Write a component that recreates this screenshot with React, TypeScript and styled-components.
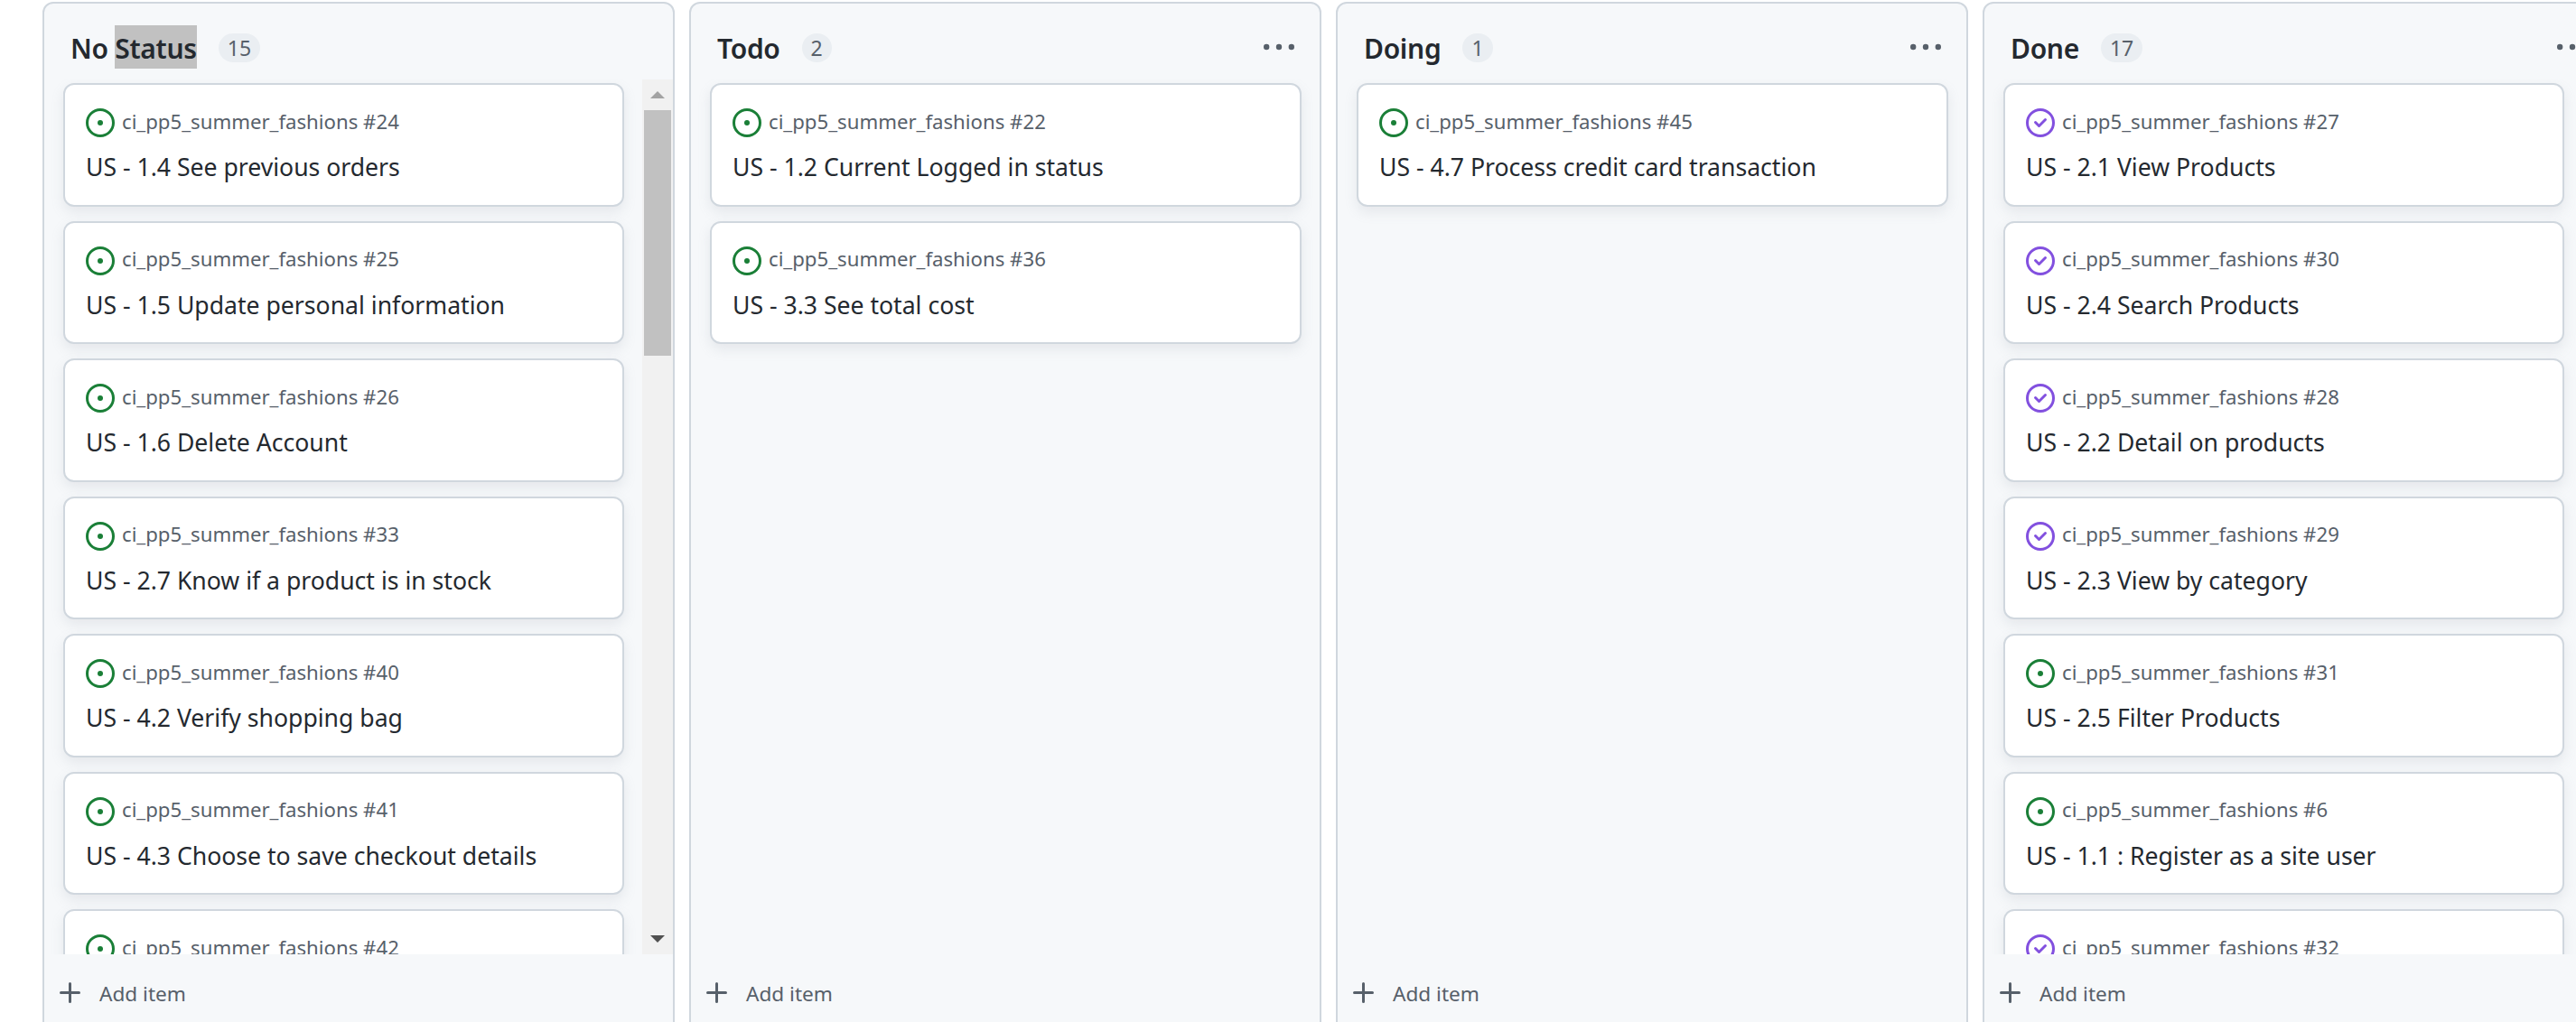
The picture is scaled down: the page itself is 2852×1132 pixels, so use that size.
import styled, { createGlobalStyle } from "styled-components";

const GlobalStyle = createGlobalStyle`
  html, body {
    margin: 0;
    padding: 0;
    background: #ffffff;
    overflow: hidden;
  }
  body {
    font-family: "Noto Sans", "Open Sans", sans-serif;
    color: #24292f;
  }
`;

const Board = styled.div`
  display: flex;
  gap: 16px;
  width: 2852px;
  height: 1132px;
  padding: 2px 0 0 47px;
  box-sizing: border-box;
  overflow: hidden;
`;

const Column = styled.section`
  display: flex;
  flex-direction: column;
  flex: 0 0 700px;
  height: 1160px;
  box-sizing: border-box;
  background: #f6f8fa;
  border: 2px solid #d0d7de;
  border-radius: 12px;
`;

const ColumnHeader = styled.header`
  display: flex;
  align-items: center;
  flex: 0 0 84px;
  padding: 14px 28px 0 29px;
  box-sizing: border-box;
`;

const ColumnTitle = styled.h2`
  margin: -2px 0 0;
  padding-top: 4px;
  font-size: 30px;
  font-weight: 600;
  line-height: 44px;
  color: #24292f;
  letter-spacing: -0.3px;
`;

// the word the user had dragged over in the screenshot
const Selected = styled.span`
  display: inline-block;
  margin-top: -4px;
  padding-top: 4px;
  background: #c1c1c1;
`;

const Count = styled.span`
  display: flex;
  align-items: center;
  justify-content: center;
  height: 32px;
  min-width: 12px;
  padding: 0 10px;
  margin-left: 24px;
  border-radius: 16px;
  background: #eaeef2;
  color: #57606a;
  font-size: 23px;
`;

const MenuIcon = styled.svg`
  margin-left: auto;
  width: 34px;
  height: 34px;
  fill: #57606a;
  flex: none;
`;

const ColumnBody = styled.div`
  display: flex;
  flex: 0 0 969px;
  overflow: hidden;
`;

const CardList = styled.div`
  display: flex;
  flex-direction: column;
  gap: 16px;
  flex: 1;
  min-width: 0;
  padding: 4px 20px 0 21px;
  overflow: hidden;
`;

const Card = styled.article`
  flex: 0 0 136.5px;
  box-sizing: border-box;
  padding: 26px 23px 0;
  background: #ffffff;
  border: 2px solid #d0d7de;
  border-radius: 12px;
  box-shadow: 0 6px 14px rgba(140, 149, 159, 0.16);
`;

const CardMeta = styled.div`
  display: flex;
  align-items: center;
  gap: 8px;
  height: 32px;
  color: #57606a;
  font-size: 22.2px;
  line-height: 32px;
`;

const RepoLabel = styled.span`
  margin-top: -3px;
`;

const StateIcon = styled.svg<{ $closed: boolean }>`
  width: 32px;
  height: 32px;
  flex: none;
  fill: ${(p) => (p.$closed ? "#8250df" : "#1a7f37")};
`;

const CardTitle = styled.div`
  margin-top: 15px;
  font-size: 26.6px;
  line-height: 36px;
  color: #24292f;
`;

const ScrollBar = styled.div`
  display: flex;
  flex-direction: column;
  align-items: center;
  flex: 0 0 34px;
  background: #f1f1f1;
`;

const ScrollArrow = styled.div<{ $down?: boolean }>`
  display: flex;
  align-items: center;
  justify-content: center;
  flex: 0 0 34px;
  width: 100%;
  &::before {
    content: "";
    border-left: 8px solid transparent;
    border-right: 8px solid transparent;
    ${(p) =>
      p.$down
        ? "border-top: 8px solid #505050;"
        : "border-bottom: 8px solid #a3a3a3;"}
  }
`;

const ScrollThumb = styled.div`
  flex: 0 0 272px;
  width: 30px;
  background: #c1c1c1;
`;

const ScrollSpace = styled.div`
  flex: 1;
`;

const ColumnFooter = styled.footer`
  display: flex;
  align-items: center;
  flex: 0 0 82px;
  padding: 4px 0 0 13px;
  box-sizing: border-box;
  color: #57606a;
  font-size: 22.6px;
`;

const PlusIcon = styled.svg`
  width: 32px;
  height: 32px;
  fill: #57606a;
  flex: none;
  margin-right: 16px;
`;

type Item = { id: number; title: string; closed?: boolean };

type ColumnData = {
  name: string;
  count: number;
  scroll?: boolean;
  menu?: boolean;
  items: Item[];
};

const columns: ColumnData[] = [
  {
    name: "No Status",
    count: 15,
    scroll: true,
    items: [
      { id: 24, title: "US - 1.4 See previous orders" },
      { id: 25, title: "US - 1.5 Update personal information" },
      { id: 26, title: "US - 1.6 Delete Account" },
      { id: 33, title: "US - 2.7 Know if a product is in stock" },
      { id: 40, title: "US - 4.2 Verify shopping bag" },
      { id: 41, title: "US - 4.3 Choose to save checkout details" },
      { id: 42, title: "US - 4.4 Checkout" },
    ],
  },
  {
    name: "Todo",
    count: 2,
    menu: true,
    items: [
      { id: 22, title: "US - 1.2 Current Logged in status" },
      { id: 36, title: "US - 3.3 See total cost" },
    ],
  },
  {
    name: "Doing",
    count: 1,
    menu: true,
    items: [{ id: 45, title: "US - 4.7 Process credit card transaction" }],
  },
  {
    name: "Done",
    count: 17,
    scroll: true,
    menu: true,
    items: [
      { id: 27, title: "US - 2.1 View Products", closed: true },
      { id: 30, title: "US - 2.4 Search Products", closed: true },
      { id: 28, title: "US - 2.2 Detail on products", closed: true },
      { id: 29, title: "US - 2.3 View by category", closed: true },
      { id: 31, title: "US - 2.5 Filter Products" },
      { id: 6, title: "US - 1.1 : Register as a site user" },
      { id: 32, title: "US - 2.6 Sort Products", closed: true },
    ],
  },
];

function IssueIcon({ closed }: { closed: boolean }) {
  return (
    <StateIcon $closed={closed} viewBox="0 0 16 16">
      {closed ? (
        <>
          <path d="M11.28 6.78a.75.75 0 0 0-1.06-1.06L7.25 8.69 5.78 7.22a.75.75 0 0 0-1.06 1.06l2 2a.75.75 0 0 0 1.06 0l3.5-3.5Z" />
          <path d="M16 8A8 8 0 1 1 0 8a8 8 0 0 1 16 0Zm-1.5 0a6.5 6.5 0 1 0-13 0 6.5 6.5 0 0 0 13 0Z" />
        </>
      ) : (
        <>
          <path d="M8 9.5a1.5 1.5 0 1 0 0-3 1.5 1.5 0 0 0 0 3Z" />
          <path d="M8 0a8 8 0 1 1 0 16A8 8 0 0 1 8 0ZM1.5 8a6.5 6.5 0 1 0 13 0 6.5 6.5 0 0 0-13 0Z" />
        </>
      )}
    </StateIcon>
  );
}

function BoardColumn({ data }: { data: ColumnData }) {
  const words = data.name.split(" ");
  return (
    <Column>
      <ColumnHeader>
        <ColumnTitle>
          {words.length > 1 ? (
            <>
              {words[0]} <Selected>{words[1]}</Selected>
            </>
          ) : (
            data.name
          )}
        </ColumnTitle>
        <Count>{data.count}</Count>
        {data.menu && (
          <MenuIcon viewBox="0 0 16 16">
            <path d="M8 9a1.5 1.5 0 1 0 0-3 1.5 1.5 0 0 0 0 3ZM1.5 9a1.5 1.5 0 1 0 0-3 1.5 1.5 0 0 0 0 3Zm13 0a1.5 1.5 0 1 0 0-3 1.5 1.5 0 0 0 0 3Z" />
          </MenuIcon>
        )}
      </ColumnHeader>
      <ColumnBody>
        <CardList>
          {data.items.map((item) => (
            <Card key={item.id}>
              <CardMeta>
                <IssueIcon closed={!!item.closed} />
                <RepoLabel>ci_pp5_summer_fashions #{item.id}</RepoLabel>
              </CardMeta>
              <CardTitle>{item.title}</CardTitle>
            </Card>
          ))}
        </CardList>
        {data.scroll && (
          <ScrollBar>
            <ScrollArrow />
            <ScrollThumb />
            <ScrollSpace />
            <ScrollArrow $down />
          </ScrollBar>
        )}
      </ColumnBody>
      <ColumnFooter>
        <PlusIcon viewBox="0 0 16 16">
          <path d="M7.75 2a.75.75 0 0 1 .75.75V7h4.25a.75.75 0 0 1 0 1.5H8.5v4.25a.75.75 0 0 1-1.5 0V8.5H2.75a.75.75 0 0 1 0-1.5H7V2.75A.75.75 0 0 1 7.75 2Z" />
        </PlusIcon>
        Add item
      </ColumnFooter>
    </Column>
  );
}

export default function App() {
  return (
    <>
      <GlobalStyle />
      <Board>
        {columns.map((column) => (
          <BoardColumn key={column.name} data={column} />
        ))}
      </Board>
    </>
  );
}
